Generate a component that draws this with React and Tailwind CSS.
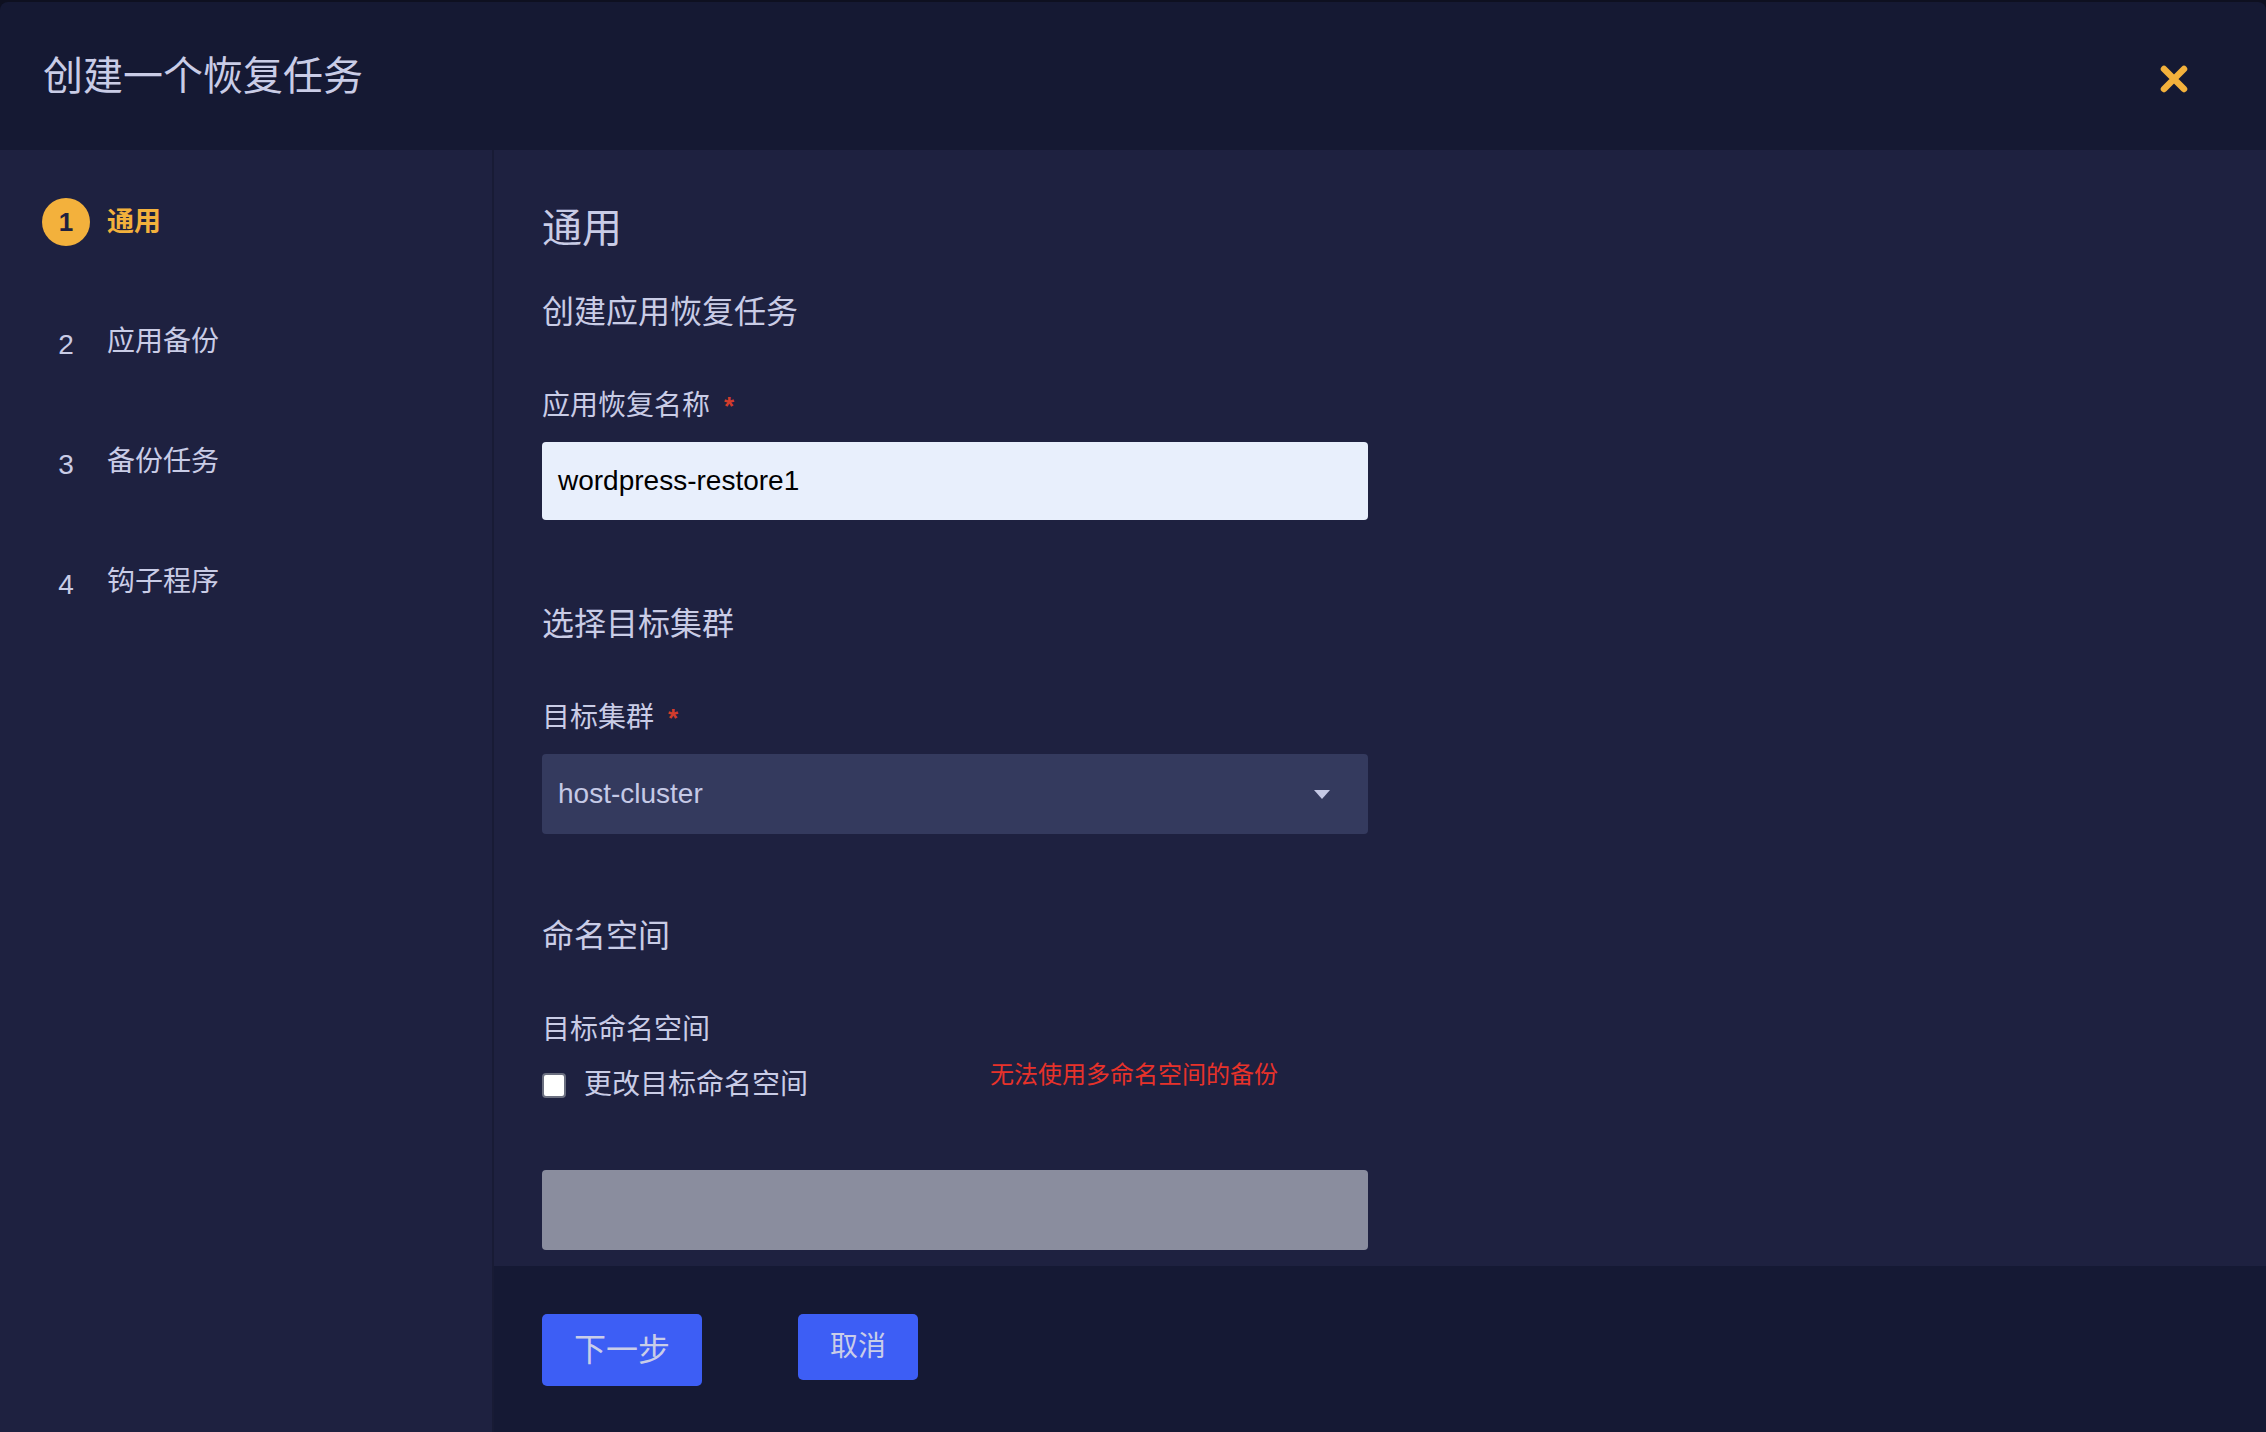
import React from 'react';

const cjk = "font-['Liberation_Sans','Noto_Sans_CJK_SC',sans-serif]";

const steps = [
  {n: 1, label: '通用', active: true},
  {n: 2, label: '应用备份'},
  {n: 3, label: '备份任务'},
  {n: 4, label: '钩子程序'},
];

function CloseIcon() {
  return (
    <svg width="28" height="28" viewBox="0 0 28 28" fill="none">
      <path d="M4 4L24 24M24 4L4 24" stroke="#f3b13c" strokeWidth="6.5" strokeLinecap="round" />
    </svg>
  );
}

function Caret() {
  return (
    <svg width="16" height="9" viewBox="0 0 16 9">
      <path d="M0 0H16L8 9Z" fill="#c5c9e6" />
    </svg>
  );
}

function Sidebar() {
  return (
    <div className="w-[494px] shrink-0 border-r-2 border-[#181b35] bg-[#1e2140] pt-[12px]">
      {steps.map((s) => (
        <div key={s.n} className="flex h-[120px] items-center gap-[17px] pl-[42px]">
          {s.active ? (
            <div className="flex h-[48px] w-[48px] items-center justify-center rounded-full bg-[#f3b13c] text-[26px] font-bold text-[#1e2140]">
              {s.n}
            </div>
          ) : (
            <div className="flex h-[48px] w-[48px] items-center justify-center pt-[6px] text-[28px] text-[#c9cce6]">
              {s.n}
            </div>
          )}
          <span className={s.active ? 'text-[27px] font-bold text-[#f3b13c]' : 'text-[28px] text-[#c9cce6]'}>
            {s.label}
          </span>
        </div>
      ))}
    </div>
  );
}

function Label({children, required}) {
  return (
    <div className="flex items-center text-[28px] leading-[40px] text-[#c9cce6]">
      {children}
      {required && <span className="ml-[14px] text-[26px] font-bold text-[#d23c2c]">*</span>}
    </div>
  );
}

export default function App() {
  return (
    <div className={`h-[1432px] w-[2266px] bg-[#0e1020] pt-[2px] ${cjk}`}>
      <div className="flex h-[1430px] flex-col overflow-hidden rounded-t-[8px]">
        <div className="flex h-[148px] shrink-0 items-center justify-between bg-[#151933] pl-[43px] pr-[78px]">
          <h1 className="text-[40px] font-normal text-[#c9cce6]">创建一个恢复任务</h1>
          <button className="mt-[6px]"><CloseIcon /></button>
        </div>

        <div className="flex flex-1">
          <Sidebar />

          <div className="flex flex-1 flex-col">
            <div className="flex-1 bg-[#1e2140] pl-[48px] pt-[54px]">
              <h2 className="text-[40px] leading-[48px] text-[#c9cce6]">通用</h2>
              <h3 className="mt-[38px] text-[32px] leading-[44px] text-[#c9cce6]">创建应用恢复任务</h3>

              <div className="mt-[52px]">
                <Label required>应用恢复名称</Label>
              </div>
              <div className="mt-[16px] flex h-[78px] w-[826px] items-center rounded-[4px] bg-[#e8effc] pl-[16px] text-[28px] text-black">
                wordpress-restore1
              </div>

              <h3 className="mt-[82px] text-[32px] leading-[44px] text-[#c9cce6]">选择目标集群</h3>
              <div className="mt-[52px]">
                <Label required>目标集群</Label>
              </div>
              <div className="mt-[16px] flex h-[80px] w-[826px] items-center justify-between rounded-[4px] bg-[#343a5e] pl-[16px] pr-[38px] text-[28px] text-[#c5c9e6]">
                <span>host-cluster</span>
                <Caret />
              </div>

              <h3 className="mt-[80px] text-[32px] leading-[44px] text-[#c9cce6]">命名空间</h3>
              <div className="mt-[52px]">
                <Label>目标命名空间</Label>
              </div>
              <div className="mt-[15px] flex items-start">
                <div className="flex h-[40px] w-[448px] items-center gap-[18px]">
                  <span className="h-[25px] w-[24px] rounded-[4px] border-2 border-[#6b6f80] bg-white" />
                  <span className="text-[28px] text-[#c9cce6]">更改目标命名空间</span>
                </div>
                <span className="text-[24px] leading-[20px] text-[#e8322a]">无法使用多命名空间的备份</span>
              </div>

              <div className="mt-[65px] h-[80px] w-[826px] rounded-[4px] bg-[#8a8d9e]" />
            </div>

            <div className="flex h-[166px] shrink-0 items-start gap-[96px] bg-[#151934] pl-[48px] pt-[48px]">
              <button className="flex h-[72px] w-[160px] items-center justify-center rounded-[5px] bg-[#3d5ef5] text-[32px] text-[#c9cde8]">
                下一步
              </button>
              <button className="flex h-[66px] w-[120px] items-center justify-center rounded-[5px] bg-[#3d5ef5] text-[28px] text-[#c9cde8]">
                取消
              </button>
            </div>
          </div>
        </div>
      </div>
    </div>
  );
}
